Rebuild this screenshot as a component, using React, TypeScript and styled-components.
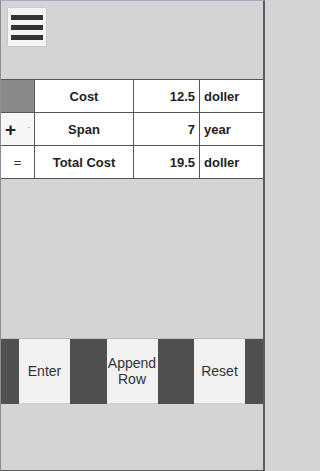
import React from "react";
import styled, { createGlobalStyle } from "styled-components";

const Global = createGlobalStyle`
  html, body { margin: 0; padding: 0; background: #d4d4d4; }
  body { font-family: "Liberation Sans", Arial, sans-serif; }
`;

const Frame = styled.div`
  width: 265px;
  height: 471px;
  box-sizing: border-box;
  background: #d4d4d4;
  border-top: 1px solid #a9a9c4;
  border-left: 1px solid #8c8c9c;
  border-right: 2px solid #5c5c68;
  border-bottom: 1px solid #5a5a5a;
  display: flex;
  flex-direction: column;
  overflow: hidden;
`;

const Header = styled.div`
  padding: 7px 0 0 7px;
  height: 78px;
  box-sizing: border-box;
  flex: none;
`;

const MenuButton = styled.button`
  width: 38px;
  height: 38px;
  padding: 0;
  border: none;
  background: #f4f4f4;
  box-shadow: 0 0 1px rgba(0, 0, 0, 0.25);
  display: flex;
  flex-direction: column;
  align-items: center;
  justify-content: center;
  gap: 5px;
`;

const Bar = styled.span`
  display: block;
  width: 32px;
  height: 5px;
  background: #333;
`;

const Table = styled.table`
  border-collapse: collapse;
  table-layout: fixed;
  width: 265px;
  margin-left: -1px;
  flex: none;
`;

const Cell = styled.td<{ $align?: string; $bg?: string }>`
  border: 1px solid #555;
  height: 33px;
  padding: 0 4px;
  box-sizing: border-box;
  background: ${(p) => p.$bg || "#fff"};
  text-align: ${(p) => p.$align || "center"};
  font-size: 13px;
  font-weight: bold;
  color: #222;
  white-space: nowrap;
`;

const OpCell = styled.td<{ $bg?: string }>`
  border: 1px solid #555;
  height: 33px;
  padding: 0;
  box-sizing: border-box;
  background: ${(p) => p.$bg || "#fff"};
  font-size: 13px;
  color: #333;
  text-align: center;
`;

const SelectBox = styled.div`
  display: flex;
  align-items: center;
  justify-content: space-between;
  padding: 0 4px 0 4px;
  height: 100%;
`;

const Plus = styled.span`
  font-size: 19px;
  font-weight: bold;
  color: #222;
  line-height: 1;
`;

const Caret = styled.span`
  font-size: 7px;
  color: #999;
`;

const Spacer = styled.div`
  flex: 1;
`;

const ButtonBar = styled.div`
  height: 66px;
  background: #505050;
  border-top: 1px solid #bdbdbd;
  box-sizing: border-box;
  display: flex;
  justify-content: space-between;
  padding: 0 18px 0 18px;
  margin-bottom: 66px;
  flex: none;
`;

const ActionButton = styled.button`
  width: 51px;
  height: 100%;
  border: none;
  border-bottom: 1px solid #cfcfcf;
  background: #f2f2f2;
  color: #333;
  font-family: "Liberation Sans", Arial, sans-serif;
  font-size: 14px;
  line-height: 16px;
  padding: 0;
`;

export default function App() {
  return (
    <>
      <Global />
      <Frame>
        <Header>
          <MenuButton aria-label="menu">
            <Bar />
            <Bar />
            <Bar />
          </MenuButton>
        </Header>
        <Table>
          <colgroup>
            <col style={{ width: 34 }} />
            <col style={{ width: 99 }} />
            <col style={{ width: 66 }} />
            <col style={{ width: 66 }} />
          </colgroup>
          <tbody>
            <tr>
              <OpCell $bg="#8a8a8a" />
              <Cell>Cost</Cell>
              <Cell $align="right">12.5</Cell>
              <Cell $align="left">doller</Cell>
            </tr>
            <tr>
              <OpCell $bg="#f7f7f7">
                <SelectBox>
                  <Plus>+</Plus>
                  <Caret>ˇ</Caret>
                </SelectBox>
              </OpCell>
              <Cell>Span</Cell>
              <Cell $align="right">7</Cell>
              <Cell $align="left">year</Cell>
            </tr>
            <tr>
              <OpCell>=</OpCell>
              <Cell>Total Cost</Cell>
              <Cell $align="right">19.5</Cell>
              <Cell $align="left">doller</Cell>
            </tr>
          </tbody>
        </Table>
        <Spacer />
        <ButtonBar>
          <ActionButton>Enter</ActionButton>
          <ActionButton>
            Append
            <br />
            Row
          </ActionButton>
          <ActionButton>Reset</ActionButton>
        </ButtonBar>
      </Frame>
    </>
  );
}
